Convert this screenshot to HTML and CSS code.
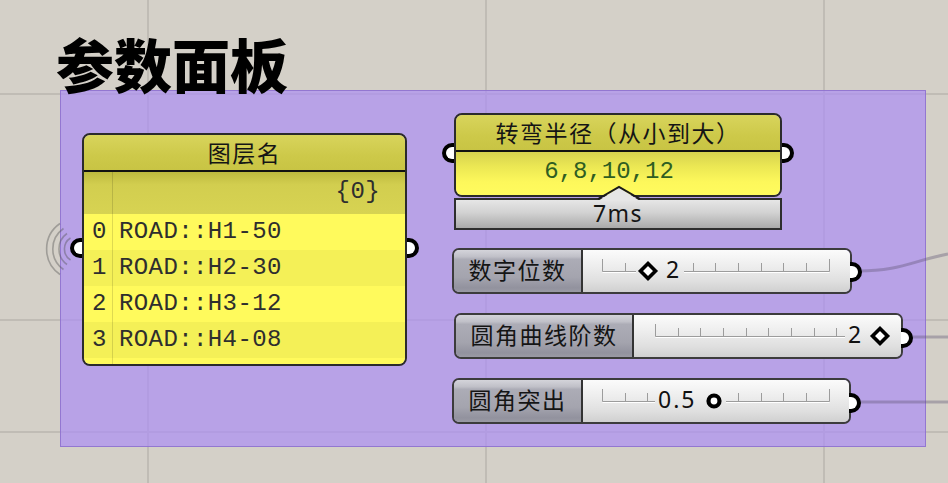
FILE: index.html
```html
<!DOCTYPE html>
<html lang="zh-CN">
<head>
<meta charset="utf-8">
<title>参数面板</title>
<link rel="stylesheet" href="styles.css">
</head>
<body>
<main class="canvas">
  <svg class="grid" width="948" height="483" viewBox="0 0 948 483" aria-hidden="true">
    <line x1="148" y1="0" x2="148" y2="483"/>
    <line x1="486" y1="0" x2="486" y2="483"/>
    <line x1="824" y1="0" x2="824" y2="483"/>
    <line x1="0" y1="94" x2="948" y2="94"/>
    <line x1="0" y1="320" x2="948" y2="320"/>
    <line x1="0" y1="432" x2="948" y2="432"/>
  </svg>

  <div class="group"></div>

  <svg class="wires" width="948" height="483" viewBox="0 0 948 483" aria-hidden="true">
    <path class="wire" d="M858 271 C 900 271, 912 261, 948 254"/>
    <path class="wire" d="M910 337 L 948 337"/>
    <path class="wire" d="M858 402 L 948 402"/>
    <g class="waves">
      <path d="M70.5 238 A13 13 0 0 0 70.5 260"/>
      <path d="M67 233.5 A19 19 0 0 0 67 264.5"/>
      <path d="M63.5 228.5 A25 25 0 0 0 63.5 269.5"/>
      <path d="M60 223.5 A31 31 0 0 0 60 274.5"/>
    </g>
  </svg>

  <h1 class="title">参数面板</h1>

  <section class="node layers">
    <div class="frame">
      <div class="head">图层名</div>
      <div class="list">
        <div class="row path"><span class="idx"></span><span class="val">{0}</span></div>
        <div class="row light"><span class="idx">0</span><span class="val">ROAD::H1-50</span></div>
        <div class="row dark"><span class="idx">1</span><span class="val">ROAD::H2-30</span></div>
        <div class="row light"><span class="idx">2</span><span class="val">ROAD::H3-12</span></div>
        <div class="row dark"><span class="idx">3</span><span class="val">ROAD::H4-08</span></div>
        <div class="row light filler"><span class="idx"></span><span class="val"></span></div>
      </div>
    </div>
    <span class="port in"></span>
    <span class="port out"></span>
  </section>

  <section class="node numbers">
    <div class="frame">
      <div class="head">转弯半径（从小到大）</div>
      <div class="value">6,8,10,12</div>
    </div>
    <div class="timer">
      <svg class="notch" width="44" height="16" viewBox="0 0 44 16" aria-hidden="true">
        <polygon class="notch-fill" points="1,16 22,2.5 43,16"/>
        <polyline class="notch-line" points="1,14 22,2 43,14"/>
      </svg>
      <span>7ms</span>
    </div>
    <span class="port in"></span>
    <span class="port out"></span>
  </section>

  <section class="node slider s1">
    <div class="label">数字位数</div>
    <div class="track">
      <svg class="ticks" width="267" height="42" viewBox="0 0 267 42" aria-hidden="true">
        <path class="tick-shine" d="M19.5 22.5 H246.5"/>
        <path class="tick-line" d="M19.5 21.5 H246.5 M19.5 9 V21.5 M246.5 9 V21.5 M42.5 13 V21.5 M64.5 13 V21.5 M87.5 13 V21.5 M110.5 13 V21.5 M132.5 13 V21.5 M155.5 13 V21.5 M178.5 13 V21.5 M200.5 13 V21.5 M223.5 13 V21.5"/>
      </svg>
      <span class="knob">
        <svg class="mark" width="18" height="18" viewBox="0 0 18 18" aria-hidden="true"><polygon points="9,1.5 16.5,9 9,16.5 1.5,9"/></svg>
        <span class="num">2</span>
      </span>
    </div>
    <span class="port out"></span>
  </section>

  <section class="node slider s2">
    <div class="label">圆角曲线阶数</div>
    <div class="track">
      <svg class="ticks" width="267" height="42" viewBox="0 0 267 42" aria-hidden="true">
        <path class="tick-shine" d="M19.5 22.5 H246.5"/>
        <path class="tick-line" d="M19.5 21.5 H246.5 M19.5 9 V21.5 M246.5 9 V21.5 M42.5 13 V21.5 M64.5 13 V21.5 M87.5 13 V21.5 M110.5 13 V21.5 M132.5 13 V21.5 M155.5 13 V21.5 M178.5 13 V21.5 M200.5 13 V21.5 M223.5 13 V21.5"/>
      </svg>
      <span class="knob">
        <span class="num">2</span>
        <svg class="mark" width="18" height="18" viewBox="0 0 18 18" aria-hidden="true"><polygon points="9,1.5 16.5,9 9,16.5 1.5,9"/></svg>
      </span>
    </div>
    <span class="port out"></span>
  </section>

  <section class="node slider s3">
    <div class="label">圆角突出</div>
    <div class="track">
      <svg class="ticks" width="267" height="42" viewBox="0 0 267 42" aria-hidden="true">
        <path class="tick-shine" d="M19.5 22.5 H246.5"/>
        <path class="tick-line" d="M19.5 21.5 H246.5 M19.5 9 V21.5 M246.5 9 V21.5 M42.5 13 V21.5 M64.5 13 V21.5 M87.5 13 V21.5 M110.5 13 V21.5 M132.5 13 V21.5 M155.5 13 V21.5 M178.5 13 V21.5 M200.5 13 V21.5 M223.5 13 V21.5"/>
      </svg>
      <span class="knob">
        <span class="num">0.5</span>
        <svg class="mark" width="18" height="18" viewBox="0 0 18 18" aria-hidden="true"><circle cx="9" cy="9" r="5.5"/></svg>
      </span>
    </div>
    <span class="port out"></span>
  </section>
</main>
</body>
</html>
```

FILE: styles.css
```css
* {
  box-sizing: border-box;
  margin: 0;
  padding: 0;
}

html,
body {
  width: 948px;
  height: 483px;
  overflow: hidden;
}

body {
  background: #d4d0c8;
  font-family: "Noto Sans CJK SC", "Noto Sans", sans-serif;
  color: #141414;
}

.canvas {
  position: relative;
  width: 948px;
  height: 483px;
}

.grid,
.wires {
  position: absolute;
  left: 0;
  top: 0;
}

.grid line {
  stroke: #c0bcb5;
  stroke-width: 2;
}

.group {
  position: absolute;
  left: 60px;
  top: 90px;
  width: 866px;
  height: 357px;
  background: rgba(172, 142, 243, 0.7);
  border: 1px solid rgba(140, 112, 205, 0.85);
}

.wire {
  fill: none;
  stroke: rgba(95, 85, 115, 0.38);
  stroke-width: 3;
}

.waves path {
  fill: none;
  stroke: rgba(80, 80, 80, 0.4);
  stroke-width: 1.6;
}

.title {
  position: absolute;
  left: 56px;
  top: 34px;
  font-family: "Noto Sans CJK SC", sans-serif;
  font-size: 58px;
  font-weight: 900;
  line-height: 1;
  color: #000;
}

/* ---------- generic node ---------- */
.node {
  position: absolute;
}

.port {
  position: absolute;
  width: 12px;
  height: 20px;
  background: #fff;
  border: 4px solid #000;
}

.port.out {
  left: 100%;
  border-left: 0;
  border-radius: 0 10px 10px 0;
}

.port.in {
  right: 100%;
  border-right: 0;
  border-radius: 10px 0 0 10px;
}

.frame {
  display: flex;
  flex-direction: column;
  border: 2px solid #2b2b2b;
  border-radius: 8px;
  overflow: hidden;
}

.head {
  height: 37px;
  flex: none;
  display: flex;
  align-items: center;
  justify-content: center;
  border-bottom: 2px solid #111;
  background: linear-gradient(#d8d45c, #cdc949 60%, #c8c444);
  font-size: 23px;
  letter-spacing: 1.5px;
  line-height: 1;
  color: #151515;
}

/* ---------- layer panel ---------- */
.layers {
  left: 82px;
  top: 133px;
  width: 325px;
}

.layers .frame {
  height: 233px;
}

.list {
  flex: 1;
  display: flex;
  flex-direction: column;
  font-family: "Liberation Mono", monospace;
  font-size: 24px;
  letter-spacing: 0.4px;
  line-height: 1;
  color: #2e2e2e;
}

.row {
  display: grid;
  grid-template-columns: 29px 1fr;
  height: 36px;
  flex: none;
}

.row .idx {
  display: flex;
  align-items: center;
  justify-content: center;
  border-right: 1px solid rgba(0, 0, 0, 0.13);
  padding-left: 3px;
}

.row .val {
  display: flex;
  align-items: center;
  padding-left: 6px;
}

.row.path {
  height: 42px;
  background: linear-gradient(#bdb93e 0%, #d2ce4f 30%, #d7d352 100%);
}

.row.path .val {
  justify-content: flex-end;
  padding-right: 25px;
  padding-bottom: 2px;
}

.row.light {
  background: #fffa5c;
}

.row.dark {
  background: #f4f057;
}

.row.filler {
  flex: 1;
  height: auto;
}

.layers .port {
  top: 105px;
}

/* ---------- number list ---------- */
.numbers {
  left: 454px;
  top: 113px;
  width: 328px;
  display: flex;
  flex-direction: column;
  gap: 1px;
}

.numbers .frame {
  height: 84px;
}

.numbers .value {
  flex: 1;
  display: flex;
  align-items: center;
  justify-content: center;
  padding-right: 18px;
  padding-bottom: 3px;
  background: linear-gradient(#d6d24e 0%, #ece854 35%, #fdf85b 70%, #fffb5e 100%);
  font-family: "Liberation Mono", monospace;
  font-size: 24px;
  line-height: 1;
  color: #2f5e22;
}

.timer {
  position: relative;
  height: 32px;
  display: flex;
  align-items: center;
  justify-content: center;
  border: 2px solid #2e2e2e;
  background: linear-gradient(#e6e6e6 0%, #d2d2d2 45%, #aaaaaa 100%);
  font-family: "Noto Sans", sans-serif;
  font-size: 23px;
  letter-spacing: 1.5px;
  line-height: 1;
  color: #151515;
}

.timer span {
  padding-bottom: 2px;
}

.notch {
  position: absolute;
  left: 141px;
  top: -15px;
  overflow: visible;
}

.notch-fill {
  fill: #e6e6e6;
}

.notch-line {
  fill: none;
  stroke: #1a1a1a;
  stroke-width: 2;
}

.numbers .port {
  top: 30px;
}

/* ---------- sliders ---------- */
.slider {
  display: flex;
  height: 46px;
  border: 2px solid #3c3c3c;
  border-radius: 7px;
}

.s1 {
  left: 452px;
  top: 248px;
  width: 400px;
}

.s2 {
  left: 454px;
  top: 313px;
  width: 449px;
}

.s3 {
  left: 452px;
  top: 378px;
  width: 399px;
}

.slider .label {
  width: 129px;
  flex: none;
  display: flex;
  align-items: center;
  justify-content: center;
  padding-bottom: 4px;
  border-right: 2px solid #333;
  border-radius: 5px 0 0 5px;
  background: linear-gradient(#d4d4da 0%, #c0c0c8 16%, #acacb6 22%, #a4a4ae 65%, #92929e 90%, #9a9aa4 100%);
  font-size: 23px;
  letter-spacing: 1.5px;
  line-height: 1;
  color: #151515;
}

.s2 .label {
  width: 178px;
}

.track {
  position: relative;
  flex: 1;
  border-radius: 0 5px 5px 0;
  background: linear-gradient(#fbfbfb 0%, #ededed 40%, #dfdfdf 75%, #d0d0d0 100%);
}

.ticks {
  position: absolute;
  left: 0;
  top: 0;
}

.s2 .ticks {
  left: 2px;
}

.tick-line {
  fill: none;
  stroke: #9c9c9c;
  stroke-width: 1;
}

.tick-shine {
  fill: none;
  stroke: #ffffff;
  stroke-width: 1;
}

.knob {
  position: absolute;
  top: 0;
  bottom: 0;
  display: flex;
  align-items: center;
  padding: 0 3px;
  background: linear-gradient(#fbfbfb 0%, #ededed 40%, #dfdfdf 75%, #d0d0d0 100%);
  font-family: "Noto Sans", sans-serif;
  font-size: 23px;
  letter-spacing: 2px;
  line-height: 1;
  color: #111;
  white-space: nowrap;
}

.knob .num {
  padding-bottom: 3px;
}

.s1 .knob {
  left: 53px;
  gap: 9px;
}

.s2 .knob {
  left: 211px;
  gap: 8px;
}

.s3 .knob {
  left: 72px;
  gap: 9px;
}

.mark {
  flex: none;
  display: block;
  width: 18px;
  height: 18px;
  overflow: visible;
}

.mark polygon,
.mark circle {
  fill: #fff;
  stroke: #000;
  stroke-width: 3.6;
  stroke-linejoin: miter;
}

.mark circle {
  stroke-width: 4.2;
}

.slider .port {
  top: 12px;
}

.s2 .port,
.s3 .port {
  top: 13px;
}
```
